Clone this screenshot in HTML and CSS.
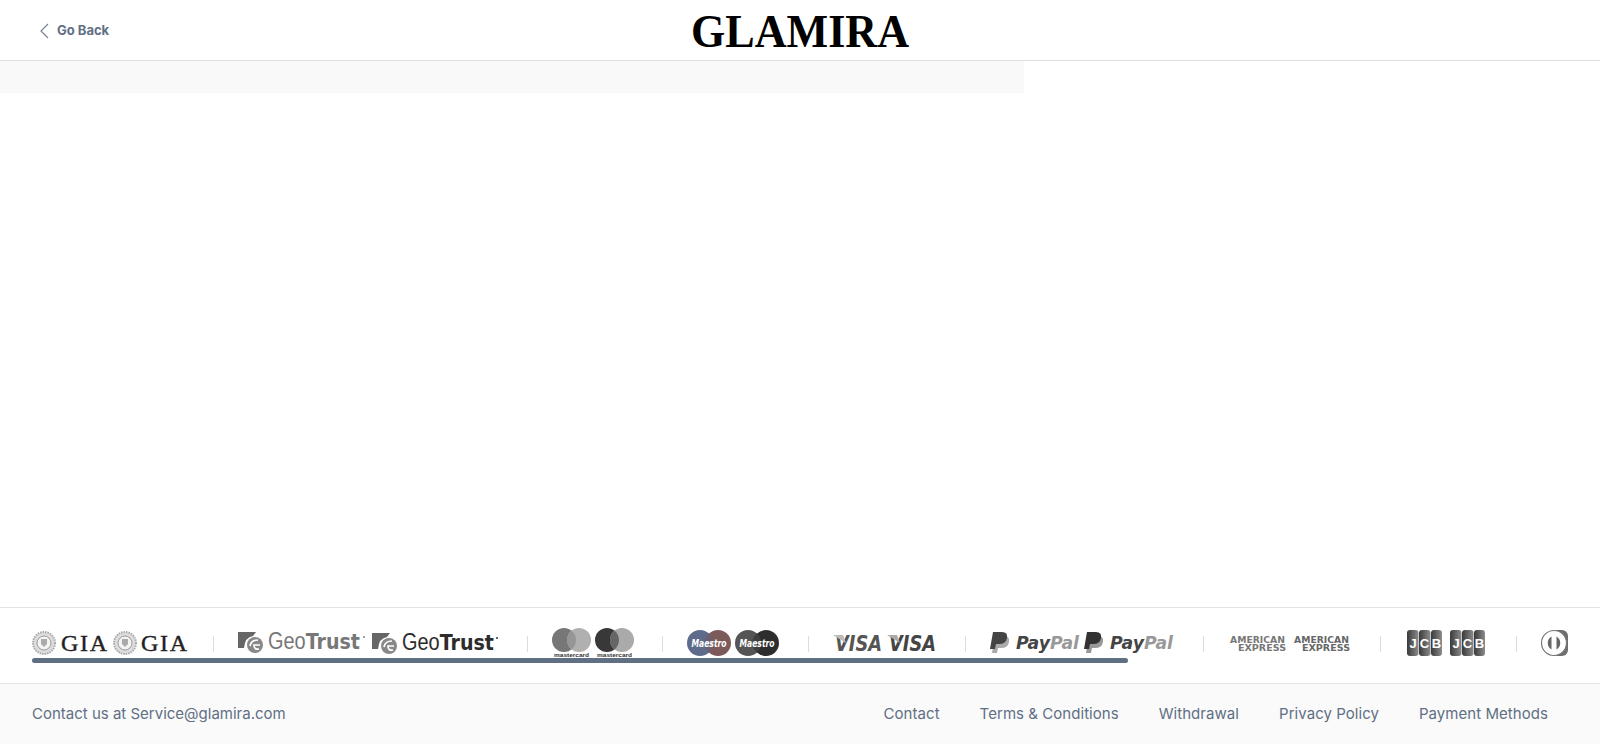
FILE: index.html
```html
<!DOCTYPE html>
<html lang="en">
<head>
<meta charset="UTF-8">
<title>GLAMIRA</title>
<link rel="stylesheet" href="styles.css">
</head>
<body>

<header class="top-bar">
  <a class="go-back" href="#">
    <svg class="chevron" width="10" height="16" viewBox="0 0 10 16"><path d="M9 1 L2 8 L9 15" fill="none" stroke="#7a8494" stroke-width="1.2"/></svg>
    Go Back
  </a>
  <svg class="brand" width="220" height="60" viewBox="0 0 220 60"><text x="1" y="47" textLength="218" lengthAdjust="spacingAndGlyphs" class="brand-text">GLAMIRA</text></svg>
</header>

<div class="progress-strip"></div>

<main class="content"></main>

<section class="trust-logos">
  <div class="logo-row">
    <div class="logo-group first">
      <svg width="77" height="32" viewBox="0 0 77 32">
        <circle cx="12" cy="15" r="11" fill="#ddd" stroke="#aaa" stroke-width="2" stroke-dasharray="1.5 1"/><circle cx="12" cy="15" r="7" fill="#f4f4f4" stroke="#999"/><path d="M9 11h6v5l-3 3-3-3z" fill="#aaa"/>
        <text x="29" y="23" class="gia" textLength="46">GIA</text>
      </svg>
      <svg width="75" height="32" viewBox="0 0 75 32">
        <circle cx="12" cy="15" r="11" fill="#ddd" stroke="#aaa" stroke-width="2" stroke-dasharray="1.5 1"/><circle cx="12" cy="15" r="7" fill="#f4f4f4" stroke="#999"/><path d="M9 11h6v5l-3 3-3-3z" fill="#aaa"/>
        <text x="28" y="23" class="gia" textLength="46">GIA</text>
      </svg>
    </div>
    <span class="sep"></span>
    <div class="logo-group">
      <svg width="130" height="32" viewBox="0 0 130 32">
        <path d="M0 4h18l-3 4q-8 1-9 12H0z" fill="#666"/><circle cx="17" cy="17" r="8" fill="#888"/><path d="M12 18q1-6 8-6M22 17h-6q0 5 5 4" fill="none" stroke="#fff" stroke-width="1.7"/>
        <text x="30" y="21" class="geo geo-gray" textLength="92" lengthAdjust="spacingAndGlyphs">Geo<tspan class="geo-bold">Trust</tspan></text>
        <circle cx="126" cy="9" r="1" fill="#888"/>
      </svg>
      <svg width="130" height="32" viewBox="0 0 130 32">
        <path d="M0 5h18l-3 4q-8 1-9 12H0z" fill="#666"/><circle cx="17" cy="18" r="8" fill="#888"/><path d="M12 19q1-6 8-6M22 18h-6q0 5 5 4" fill="none" stroke="#fff" stroke-width="1.7"/>
        <text x="30" y="22" class="geo geo-dark" textLength="92" lengthAdjust="spacingAndGlyphs">Geo<tspan class="geo-bold">Trust</tspan></text>
        <circle cx="125" cy="10" r="1" fill="#333"/>
      </svg>
    </div>
    <span class="sep"></span>
    <div class="logo-group">
      <svg width="39" height="32" viewBox="0 0 39 32">
        <circle cx="12" cy="12" r="12" fill="#777"/><circle cx="27" cy="12" r="12" fill="#b0b0b0"/><path d="M19.500 2.600a12 12 0 0 1 0 18.800a12 12 0 0 1 0-18.800z" fill="#969696"/>
        <text x="2" y="29" class="mc-text" textLength="35" lengthAdjust="spacingAndGlyphs">mastercard</text>
      </svg>
      <svg width="39" height="32" viewBox="0 0 39 32">
        <circle cx="12" cy="12" r="12" fill="#383838"/><circle cx="27" cy="12" r="12" fill="#aaa"/><path d="M19.500 2.600a12 12 0 0 1 0 18.800a12 12 0 0 1 0-18.800z" fill="#666"/>
        <text x="2" y="29" class="mc-text" textLength="35" lengthAdjust="spacingAndGlyphs">mastercard</text>
      </svg>
    </div>
    <span class="sep wide"></span>
    <div class="logo-group">
      <svg width="44" height="32" viewBox="0 0 44 32">
        <circle cx="13" cy="15" r="13" fill="#5f6b8a"/><circle cx="31" cy="15" r="13" fill="#7d5a5a"/><path d="M22 5.500a13 13 0 0 1 0 19a13 13 0 0 1 0-19z" fill="#6c5f6f"/>
        <text x="4.500" y="18.500" class="maestro" textLength="35" lengthAdjust="spacingAndGlyphs">Maestro</text>
      </svg>
      <svg width="45" height="32" viewBox="0 0 45 32">
        <circle cx="13" cy="15" r="13" fill="#555"/><circle cx="31" cy="15" r="13" fill="#2d2d2d"/><path d="M22 5.500a13 13 0 0 1 0 19a13 13 0 0 1 0-19z" fill="#3f3f3f"/>
        <text x="4.500" y="18.500" class="maestro" textLength="35" lengthAdjust="spacingAndGlyphs">Maestro</text>
      </svg>
    </div>
    <span class="sep wide"></span>
    <div class="logo-group">
      <svg width="50" height="32" viewBox="0 0 50 32">
        <text x="2" y="23" class="visa visa-gray" textLength="47" lengthAdjust="spacingAndGlyphs">VISA</text>
        <path d="M0 7h10l3 8z" fill="#bbb"/>
      </svg>
      <svg width="50" height="32" viewBox="0 0 50 32">
        <text x="2" y="23" class="visa visa-dark" textLength="47" lengthAdjust="spacingAndGlyphs">VISA</text>
        <path d="M0 7h10l3 8z" fill="#aaa"/>
      </svg>
    </div>
    <span class="sep wide"></span>
    <div class="logo-group">
      <svg width="90" height="32" viewBox="0 0 90 32">
        <path d="M5 8h9q6 0 5 6t-8 6H8l-1 5H2z" fill="#aaa"/><path d="M3 4h9q6 0 5 6t-8 6H6l-1 5H0z" fill="#444"/>
        <text x="26" y="21" class="paypal" textLength="63" lengthAdjust="spacingAndGlyphs"><tspan class="pay-dark">Pay</tspan><tspan class="pay-light">Pal</tspan></text>
      </svg>
      <svg width="91" height="32" viewBox="0 0 91 32">
        <path d="M5 8h9q6 0 5 6t-8 6H8l-1 5H2z" fill="#999"/><path d="M3 4h9q6 0 5 6t-8 6H6l-1 5H0z" fill="#333"/>
        <text x="26" y="21" class="paypal" textLength="63" lengthAdjust="spacingAndGlyphs"><tspan class="pay-dark">Pay</tspan><tspan class="pay-light">Pal</tspan></text>
      </svg>
    </div>
    <span class="sep wide"></span>
    <div class="logo-group amex-group">
      <svg width="56" height="32" viewBox="0 0 56 32">
        <text x="0" y="15" class="amex amex-gray" textLength="55" lengthAdjust="spacingAndGlyphs">AMERICAN</text>
        <text x="8" y="23" class="amex amex-gray" textLength="48" lengthAdjust="spacingAndGlyphs">EXPRESS</text>
      </svg>
      <svg width="58" height="32" viewBox="0 0 58 32">
        <text x="0" y="15" class="amex amex-dark" textLength="55" lengthAdjust="spacingAndGlyphs">AMERICAN</text>
        <text x="8" y="23" class="amex amex-dark" textLength="48" lengthAdjust="spacingAndGlyphs">EXPRESS</text>
      </svg>
    </div>
    <span class="sep wide"></span>
    <div class="logo-group jcb-group">
      <svg width="35" height="32" viewBox="0 0 35 32">
        <defs><linearGradient id="jcbShade"><stop offset="0" stop-color="#3a3a3a"/><stop offset="1" stop-color="#8c8c8c"/></linearGradient></defs>
        <rect x="0" y="2" width="11.500" height="26" rx="3" fill="url(#jcbShade)"/><rect x="12" y="2" width="11.500" height="26" rx="3" fill="url(#jcbShade)"/><rect x="24" y="2" width="11" height="26" rx="3" fill="url(#jcbShade)"/>
        <text x="6" y="19.500" class="jcb">J</text><text x="17.500" y="19.500" class="jcb">C</text><text x="29.500" y="19.500" class="jcb">B</text>
      </svg>
      <svg width="38" height="32" viewBox="0 0 38 32">
        <rect x="0" y="2" width="11.500" height="26" rx="3" fill="url(#jcbShade)"/><rect x="12" y="2" width="11.500" height="26" rx="3" fill="url(#jcbShade)"/><rect x="24" y="2" width="11" height="26" rx="3" fill="url(#jcbShade)"/>
        <text x="6" y="19.500" class="jcb">J</text><text x="17.500" y="19.500" class="jcb">C</text><text x="29.500" y="19.500" class="jcb">B</text>
      </svg>
    </div>
    <span class="sep wide"></span>
    <div class="logo-group">
      <svg width="27" height="32" viewBox="0 0 27 32">
        <rect x="8" y="2" width="19" height="26" rx="6" fill="#6f6f6f"/><circle cx="13" cy="15" r="12.500" fill="#fff" stroke="#777" stroke-width="1.200"/><path d="M10.500 8.500a7.500 7.500 0 0 0 0 13z" fill="#666"/><path d="M15.500 8.500a7.500 7.500 0 0 1 0 13z" fill="#666"/>
      </svg>
    </div>
  </div>
  <div class="scroll-thumb"></div>
</section>

<footer class="bottom-bar">
  <a class="contact-mail" href="#">Contact us at Service@glamira.com</a>
  <nav class="bottom-links">
    <a href="#">Contact</a>
    <a href="#">Terms &amp; Conditions</a>
    <a href="#">Withdrawal</a>
    <a href="#">Privacy Policy</a>
    <a href="#">Payment Methods</a>
  </nav>
</footer>

</body>
</html>
```

FILE: styles.css
```css
body {
  font-family: Inter, "Open Sans", sans-serif;
  background-color: #fff;
  color: #5f6f84;
  margin: 0;
  padding: 0;
  height: 100vh;
  display: flex;
  flex-direction: column;
  overflow: hidden;
}
a {
  color: inherit;
  text-decoration: none;
}
svg {
  overflow: visible;
}
.top-bar {
  height: 60px;
  flex: none;
  position: relative;
  display: flex;
  align-items: center;
  justify-content: center;
  border-bottom: 1px solid #dddde6;
}
.go-back {
  position: absolute;
  left: 39px;
  top: 22px;
  display: flex;
  align-items: center;
  gap: 8px;
  font-size: 13px;
  font-weight: 700;
  line-height: 17px;
}
.brand-text {
  font-family: "Liberation Serif", serif;
  font-weight: bold;
  font-size: 46px;
  fill: #000;
}
.progress-strip {
  flex: none;
  width: 1024px;
  height: 32px;
  background-color: #f9f9f9;
}
.content {
  flex: 1;
}
.trust-logos {
  flex: none;
  height: 75px;
  position: relative;
  border-top: 1px solid #e3e3e3;
  border-bottom: 1px solid #e3e3e3;
  padding-left: 32px;
  overflow: hidden;
}
.logo-row {
  display: flex;
  align-items: center;
  height: 32px;
  margin-top: 20px;
  white-space: nowrap;
}
.logo-group {
  flex: none;
  display: flex;
  align-items: center;
  gap: 4px;
  padding: 0 25px 0 24px;
}
.logo-group.first {
  padding-left: 0;
}
.amex-group {
  gap: 8px;
  padding-left: 26px;
}
.jcb-group {
  gap: 8px;
  padding-left: 26px;
}
.sep {
  flex: none;
  width: 1px;
  height: 16px;
  background-color: #dcdce2;
}
.sep.wide {
  margin-left: 3px;
}
.scroll-thumb {
  position: absolute;
  left: 32px;
  top: 50px;
  width: 1096px;
  height: 5px;
  border-radius: 3px;
  background-color: #5f6f84;
}
.gia {
  font-family: "Liberation Serif", serif;
  font-size: 24px;
  fill: #222;
  stroke: #222;
  stroke-width: 0.4;
}
.geo {
  font-family: "Liberation Sans", sans-serif;
  font-size: 23px;
}
.geo-bold {
  font-family: "DejaVu Sans", sans-serif;
  font-size: 22px;
  font-weight: bold;
}
.geo-gray {
  fill: #777;
}
.geo-dark {
  fill: #2c2c2c;
}
.mc-text {
  font-family: "Liberation Sans", sans-serif;
  font-size: 6px;
  font-weight: bold;
  fill: #333;
}
.maestro {
  font-family: "DejaVu Sans", sans-serif;
  font-size: 10.5px;
  font-weight: bold;
  font-style: italic;
  fill: #fff;
}
.visa {
  font-family: "DejaVu Sans", sans-serif;
  font-size: 21px;
  font-weight: bold;
  font-style: italic;
}
.visa-gray {
  fill: #555;
}
.visa-dark {
  fill: #444;
}
.paypal {
  font-family: "DejaVu Sans", sans-serif;
  font-size: 17px;
  font-weight: bold;
  font-style: italic;
}
.pay-dark {
  fill: #444;
}
.pay-light {
  fill: #999;
}
.amex {
  font-family: "DejaVu Sans", sans-serif;
  font-size: 9.500px;
  font-weight: bold;
}
.amex-gray {
  fill: #777;
}
.amex-dark {
  fill: #666;
}
.jcb {
  font-family: "Liberation Sans", sans-serif;
  font-size: 13px;
  font-weight: bold;
  text-anchor: middle;
  fill: #fff;
}
.bottom-bar {
  flex: none;
  height: 60px;
  box-sizing: border-box;
  background-color: #fafafa;
  padding: 0 52px 2px 32px;
  display: flex;
  align-items: center;
  justify-content: space-between;
  font-size: 15px;
}
.bottom-links {
  display: flex;
  gap: 40px;
  letter-spacing: 0.05px;
}
```
